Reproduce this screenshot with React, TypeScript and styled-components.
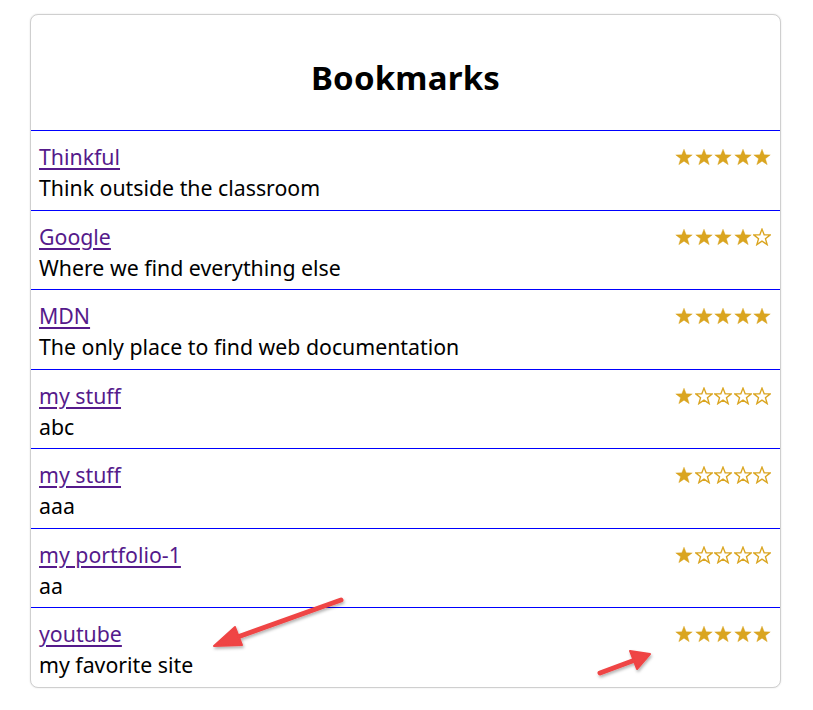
import React from 'react';
import styled, { createGlobalStyle } from 'styled-components';

const GlobalStyle = createGlobalStyle`
  body {
    margin: 0;
    background: #ffffff;
    font-family: "Noto Sans", "Open Sans", sans-serif;
    color: #000;
  }
`;

const Page = styled.div`
  position: relative;
  width: 813px;
  height: 710px;
  padding: 14px 32px 0 30px;
  box-sizing: border-box;
`;

const Card = styled.section`
  border: 1px solid #cfcfcf;
  border-radius: 8px;
  box-shadow: 0 0 2px rgba(0, 0, 0, 0.12);
  overflow: hidden;
  background: #fff;
`;

const Header = styled.header`
  height: 115px;
  padding-top: 10px;
  box-sizing: border-box;
  display: flex;
  align-items: center;
  justify-content: center;
`;

const Title = styled.h1`
  margin: 0;
  font-size: 33px;
  font-weight: 700;
  letter-spacing: 0.2px;
`;

const List = styled.ul`
  list-style: none;
  margin: 0;
  padding: 0;
`;

const Row = styled.li`
  border-top: 1px solid #0000ff;
  padding: 10px 9px 0 8px;
  height: 68.5px;
  display: flex;
  justify-content: space-between;
  align-items: flex-start;
`;

const Info = styled.div`
  display: flex;
  flex-direction: column;
  font-size: 21.3px;
  line-height: 31px;
`;

const Link = styled.a`
  color: #551a8b;
  text-decoration: underline;
  text-decoration-thickness: 2px;
  text-underline-offset: 3px;
  align-self: flex-start;
`;

const Desc = styled.span``;

const Stars = styled.div`
  display: flex;
  gap: 1.5px;
  padding-top: 7px;
`;

const StarIcon = ({ filled }: { filled: boolean }) => (
  <svg width="18" height="18" viewBox="0 0 24 24">
    <polygon
      points="12,1.5 14.9,9 23,9.2 16.6,14.2 18.9,22.2 12,17.5 5.1,22.2 7.4,14.2 1,9.2 9.1,9"
      fill={filled ? '#daa520' : '#fff'}
      stroke="#daa520"
      strokeWidth={filled ? 0.5 : 1.8}
      strokeLinejoin="miter"
    />
  </svg>
);

const Arrows = styled.svg`
  position: absolute;
  left: 0;
  top: 0;
  pointer-events: none;
`;

interface Bookmark {
  title: string;
  description: string;
  rating: number;
}

const bookmarks: Bookmark[] = [
  { title: 'Thinkful', description: 'Think outside the classroom', rating: 5 },
  { title: 'Google', description: 'Where we find everything else', rating: 4 },
  { title: 'MDN', description: 'The only place to find web documentation', rating: 5 },
  { title: 'my stuff', description: 'abc', rating: 1 },
  { title: 'my stuff', description: 'aaa', rating: 1 },
  { title: 'my portfolio-1', description: 'aa', rating: 1 },
  { title: 'youtube', description: 'my favorite site', rating: 5 },
];

export default function App() {
  return (
    <Page>
      <GlobalStyle />
      <Card>
        <Header>
          <Title>Bookmarks</Title>
        </Header>
        <List>
          {bookmarks.map((b, i) => (
            <Row key={i}>
              <Info>
                <Link href="#">{b.title}</Link>
                <Desc>{b.description}</Desc>
              </Info>
              <Stars>
                {[0, 1, 2, 3, 4].map((n) => (
                  <StarIcon key={n} filled={n < b.rating} />
                ))}
              </Stars>
            </Row>
          ))}
        </List>
      </Card>
      <Arrows width="813" height="710">
        <defs>
          <filter id="sh" x="-20%" y="-50%" width="140%" height="200%">
            <feDropShadow dx="1" dy="2" stdDeviation="1.5" floodColor="#000" floodOpacity="0.3" />
          </filter>
        </defs>
        <g filter="url(#sh)" fill="#ef4444" stroke="#ef4444" strokeLinecap="round" strokeLinejoin="round">
          <line x1="341" y1="600" x2="232" y2="639" strokeWidth="5" />
          <polygon points="214,646 235,627 242,645" strokeWidth="2" />
          <line x1="600" y1="673" x2="635" y2="660" strokeWidth="5" />
          <polygon points="650,654 630,651 637,669" strokeWidth="2" />
        </g>
      </Arrows>
    </Page>
  );
}
